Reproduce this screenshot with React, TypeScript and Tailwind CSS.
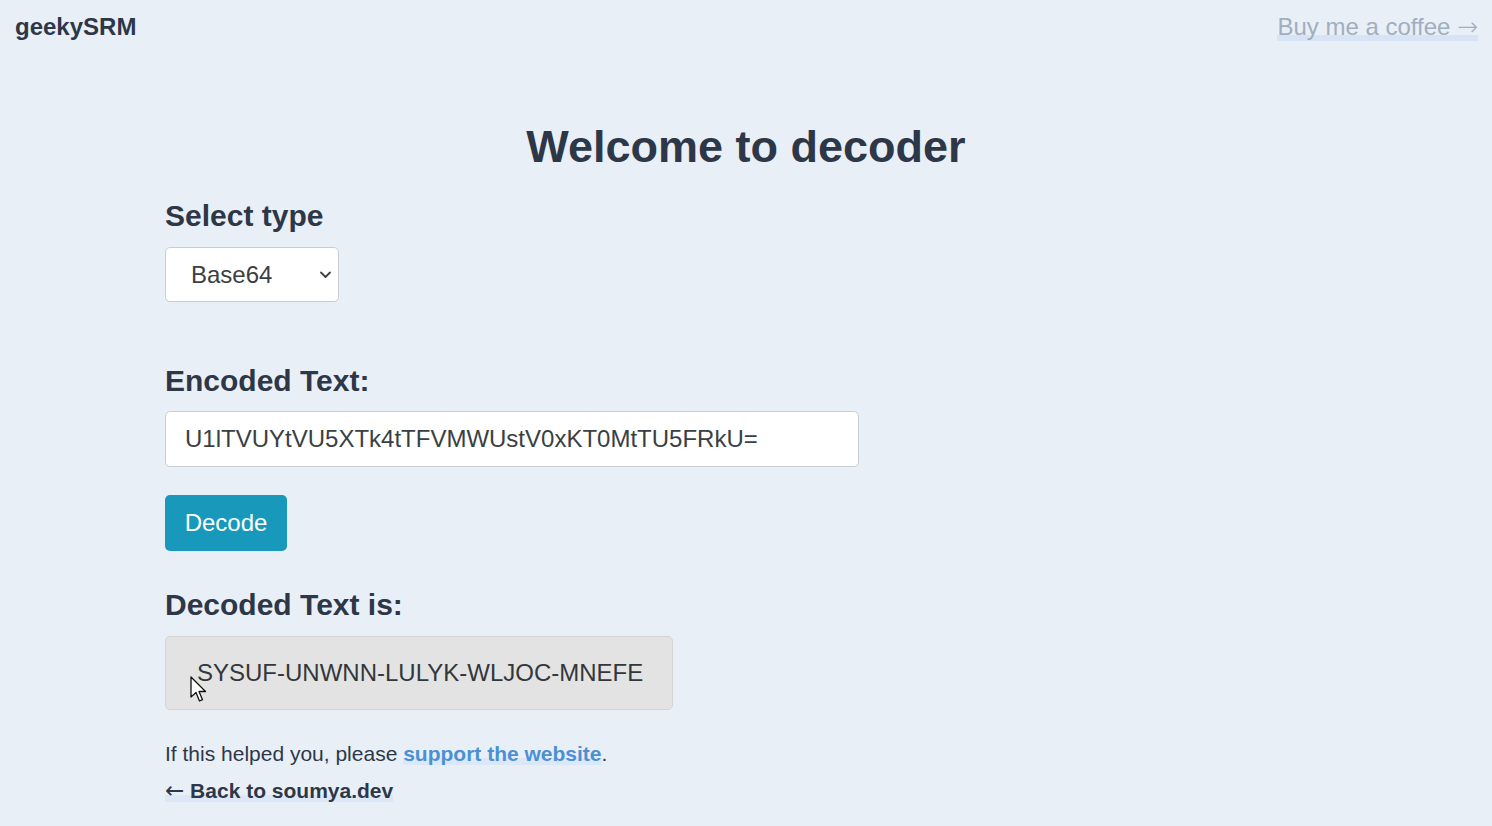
import { useState } from 'react'

export default function App() {
  const [type, setType] = useState('base64')
  const [encoded, setEncoded] = useState('U1lTVUYtVU5XTk4tTFVMWUstV0xKT0MtTU5FRkU=')

  return (
    <div className="min-h-[826px] bg-[#e9eff7] text-[#2d3748] font-['Liberation_Sans',Arial,sans-serif]">
      {/* Top bar */}
      <header className="flex items-start justify-between pl-[15px] pr-[14px] pt-[13px]">
        <a href="#" className="text-[24px] leading-[28px] font-bold text-[#2d3748]">geekySRM</a>
        <a href="#" className="text-[24px] leading-[28px] text-[#a0aec0] shadow-[inset_0_-6px_0_#d9e3f6]">
          Buy me a coffee <span className="font-['DejaVu_Sans',sans-serif] text-[25px] font-light">→</span>
        </a>
      </header>

      <h1 className="mt-[79px] text-center text-[45px] leading-[54px] font-bold">Welcome to decoder</h1>

      <main className="pl-[165px]">
        <label className="mt-[24px] block text-[30px] leading-[36px] font-bold">Select type</label>
        <div className="relative mt-[13px] w-[174px]">
          <select
            value={type}
            onChange={e => setType(e.target.value)}
            className="h-[55px] w-full appearance-none rounded-[5px] border border-[#c9ced4] bg-white pl-[25px] text-[24px] text-[#3a3f44] outline-none"
          >
            <option value="base64">Base64</option>
            <option value="hex">Hex</option>
            <option value="url">URL</option>
          </select>
          <svg className="pointer-events-none absolute right-[7px] top-[23px]" width="13" height="9" viewBox="0 0 13 9" fill="none">
            <path d="M2 2.5 L6.5 7 L11 2.5" stroke="#3a3f44" strokeWidth="1.8" strokeLinecap="round" strokeLinejoin="round" />
          </svg>
        </div>

        <label className="mt-[61px] block text-[30px] leading-[36px] font-bold">Encoded Text:</label>
        <input
          value={encoded}
          onChange={e => setEncoded(e.target.value)}
          className="mt-[12px] block h-[56px] w-[694px] rounded-[5px] border border-[#c9ced4] bg-white px-[19px] text-[24px] text-[#3a3f44] outline-none"
        />

        <button className="mt-[28px] block h-[56px] w-[122px] rounded-[5px] bg-[#1899bb] text-[24px] text-white">Decode</button>

        <label className="mt-[36px] block text-[30px] leading-[36px] font-bold">Decoded Text is:</label>
        <div className="relative mt-[13px] flex h-[74px] w-[508px] items-center rounded-[5px] border border-[#d2d4d6] bg-[#e3e3e3] pl-[31px] text-[24px] text-[#33373b]">
          SYSUF-UNWNN-LULYK-WLJOC-MNEFE
          {/* mouse pointer */}
          <svg className="absolute left-[24px] top-[39px]" width="18" height="28" viewBox="0 0 18 28">
            <path d="M1 1 L1 21 L6 16.5 L9.5 25 L12.5 23.7 L9 15.5 L15.5 15.5 Z" fill="#fff" stroke="#111" strokeWidth="1.3" strokeLinejoin="round" />
          </svg>
        </div>

        <p className="mt-[29px] text-[21px] leading-[30px] text-[#2d3748]">
          If this helped you, please{' '}
          <a href="#" className="font-bold text-[#4a90d6] shadow-[inset_0_-7px_0_#dce7f8]">support the website</a>.
        </p>
        <p className="mt-[6px] text-[21px] leading-[30px]">
          <a href="#" className="font-bold text-[#2d3748] shadow-[inset_0_-7px_0_#dce7f8]">
            <span className="font-normal font-['DejaVu_Sans',sans-serif] text-[23px]">←</span> Back to soumya.dev
          </a>
        </p>
      </main>
    </div>
  )
}
